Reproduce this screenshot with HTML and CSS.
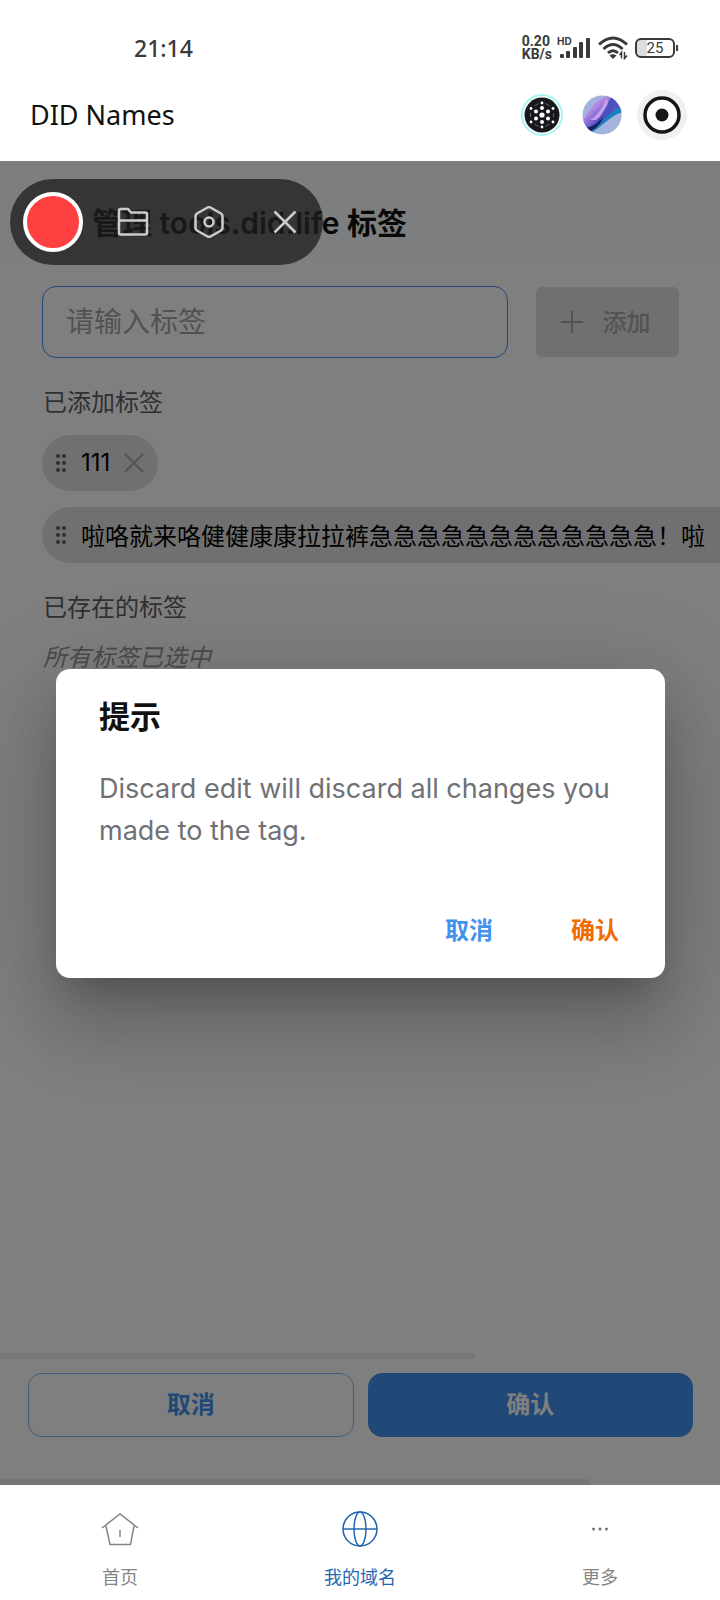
FILE: index.html
```html
<!DOCTYPE html>
<html lang="zh-CN">
<head>
  <meta charset="UTF-8" />
  <meta name="viewport" content="width=device-width, initial-scale=1.0" />
  <title>DID Names</title>
  <link rel="stylesheet" href="styles.css">
</head>
<body>
  <div class="status-bar">
    <span class="time">21:14</span>
    <div class="status-icons">
      <span class="speed"><span>0.20</span><span>KB/s</span></span>
      <span class="signal">
        <span class="hd">HD</span>
        <svg width="32" height="22" viewBox="0 0 32 22" fill="#3a3a3a">
          <rect x="1" y="17" width="4" height="4" rx="1" />
          <rect x="7" y="14" width="4" height="7" rx="1" />
          <rect x="14" y="10" width="4" height="11" rx="1" />
          <rect x="20" y="5" width="4" height="16" rx="1" />
          <rect x="27" y="1" width="4" height="20" rx="1" />
        </svg>
      </span>
      <svg width="30" height="24" viewBox="0 0 30 24" fill="none" stroke="#3a3a3a" stroke-width="3">
        <path d="M1 8.5Q15-4.500 29 8.500" />
        <path d="M5.500 13Q15 4 24.500 13" />
        <path d="M10 17Q15 12.500 20 17" />
        <path d="M11.500 19.500L15 23l3.500-3.500Q15 17 11.500 19.500z" fill="#3a3a3a" stroke="none" />
        <path d="M23.500 22.500v-6l-2 2.500M26.500 16v6.500l2.500-3" stroke-width="1.500" />
      </svg>
      <span class="battery">25</span>
    </div>
  </div>

  <header class="app-bar">
    <h1>DID Names</h1>
    <div class="app-actions">
      <button aria-label="Network">
        <svg width="50" height="50" viewBox="0 0 50 50">
          <circle cx="25" cy="25" r="20" fill="#fff" stroke="#a5f5f3" stroke-width="2" />
          <circle cx="25" cy="25" r="17.500" fill="#16181c" />
          <g fill="#fff">
            <circle cx="25" cy="25" r="2.600" />
            <circle cx="25" cy="18" r="2" /><circle cx="25" cy="32" r="2" />
            <circle cx="19" cy="21.500" r="2" /><circle cx="31" cy="21.500" r="2" />
            <circle cx="19" cy="28.500" r="2" /><circle cx="31" cy="28.500" r="2" />
            <circle cx="25" cy="13" r="1.400" /><circle cx="25" cy="37" r="1.400" />
            <circle cx="14" cy="18.500" r="1.400" /><circle cx="36" cy="18.500" r="1.400" />
            <circle cx="14" cy="32" r="1.400" /><circle cx="36" cy="32" r="1.400" />
          </g>
          <path d="M17.500 16l4-2.500M28.500 13.500l4 2.500M13.500 23v4M36.500 23v4M17.500 34l4 2.500M28.500 36.500l4-2.500" stroke="#62656a" fill="none" />
        </svg>
      </button>
      <button aria-label="Account">
        <svg width="50" height="50" viewBox="0 0 50 50">
          <defs>
            <clipPath id="avatarClip"><circle cx="25" cy="25" r="19.500" /></clipPath>
            <linearGradient id="petal" x1="0" y1="0" x2="1" y2="1">
              <stop offset="0" stop-color="#4a55b8" />
              <stop offset=".3" stop-color="#b98de6" />
              <stop offset=".55" stop-color="#5a4fc4" />
              <stop offset="1" stop-color="#1787bd" />
            </linearGradient>
          </defs>
          <g clip-path="url(#avatarClip)">
            <rect width="50" height="50" fill="#a3b3de" />
            <path d="M4 35C11 20 20 8 33 5l13 8v9C34 24 24 34 10 44z" fill="url(#petal)" />
            <path d="M13 30C21 25 26 17 29 8c5 5 0 15-10 22z" fill="#c79bea" />
            <path d="M11 38C23 31 29 17 35 6l5 4C35 23 26 33 12 41z" fill="#4a50c0" />
            <path d="M12 41C25 34 31 22 46 15v7C34 25 27 35 14 43z" fill="#1b7fbd" />
            <path d="M7 38c9-1 14-5 19-11-2 8-9 13-17 17z" fill="#17205f" />
          </g>
        </svg>
      </button>
      <button aria-label="Close">
        <svg width="50" height="50" viewBox="0 0 50 50">
          <circle cx="25" cy="25" r="25" fill="#f0f0f0" />
          <circle cx="25" cy="25" r="17" fill="#fff" stroke="#161616" stroke-width="3.500" />
          <circle cx="25" cy="25" r="6.500" fill="#161616" />
        </svg>
      </button>
    </div>
  </header>

  <main class="page">
    <h2 class="page-title">管理 tools.did.life 标签</h2>

    <div class="content">
      <form class="tag-form">
        <input type="text" id="tagInput" placeholder="请输入标签" aria-label="标签" />
        <button type="submit" disabled>
          <svg width="22" height="22" viewBox="0 0 22 22" stroke="currentColor" stroke-width="2"><path d="M0 11h22M11 0v22" /></svg>
          <span>添加</span>
        </button>
      </form>

      <h3>已添加标签</h3>
      <div class="tag-list">
        <div class="tag">
          <svg class="grip" width="12" height="20" viewBox="0 0 12 20"><circle cx="3" cy="3" r="2" /><circle cx="9" cy="3" r="2" /><circle cx="3" cy="10" r="2" /><circle cx="9" cy="10" r="2" /><circle cx="3" cy="17" r="2" /><circle cx="9" cy="17" r="2" /></svg>
          <span>111</span>
          <button aria-label="删除"><svg width="20" height="20" viewBox="0 0 20 20" stroke="currentColor" stroke-width="2"><path d="M1 1l18 18M19 1L1 19" /></svg></button>
        </div>
        <div class="tag">
          <svg class="grip" width="12" height="20" viewBox="0 0 12 20"><circle cx="3" cy="3" r="2" /><circle cx="9" cy="3" r="2" /><circle cx="3" cy="10" r="2" /><circle cx="9" cy="10" r="2" /><circle cx="3" cy="17" r="2" /><circle cx="9" cy="17" r="2" /></svg>
          <span>啦咯就来咯健健康康拉拉裤急急急急急急急急急急急急！啦</span>
          <button aria-label="删除"><svg width="20" height="20" viewBox="0 0 20 20" stroke="currentColor" stroke-width="2"><path d="M1 1l18 18M19 1L1 19" /></svg></button>
        </div>
      </div>

      <h3>已存在的标签</h3>
      <p class="empty">所有标签已选中</p>
    </div>

    <div class="scroll-track inner"></div>
    <div class="page-actions">
      <button class="btn-outline">取消</button>
      <button class="btn-primary">确认</button>
    </div>
    <div class="scroll-track outer"></div>

    <div class="overlay">
      <div class="dialog" role="dialog" aria-modal="true" aria-labelledby="dialogTitle">
        <h2 id="dialogTitle">提示</h2>
        <p>Discard edit will discard all changes you made to the tag.</p>
        <div class="dialog-actions">
          <button class="cancel">取消</button>
          <button class="confirm">确认</button>
        </div>
      </div>
    </div>

    <!-- floating screen recorder -->
    <div class="recorder">
      <button class="record" aria-label="Record"></button>
      <button aria-label="Files">
        <svg width="32" height="32" viewBox="0 0 32 32"><path d="M2 4.500Q2 3 3.500 3H11l3 3.500h14.500Q30 6.500 30 8v19q0 1.500-1.500 1.500h-25Q2 28.500 2 27zM2 14.500h28" /></svg>
      </button>
      <button aria-label="Settings">
        <svg width="32" height="32" viewBox="0 0 32 32"><path d="M14.500 1.500Q16 .5 17.500 1.500L28 7.500q1.500 1 1.500 2.500v12q0 1.500-1.500 2.500l-10.500 6q-1.500 1-3 0L4 24.500Q2.500 23.500 2.500 22V10Q2.500 8.500 4 7.500z" /><circle cx="16" cy="16" r="4.500" /></svg>
      </button>
      <button aria-label="Close recorder">
        <svg width="32" height="32" viewBox="0 0 32 32"><path d="M5.500 5.500l21 21M26.500 5.500l-21 21" /></svg>
      </button>
    </div>
  </main>

  <nav class="tab-bar">
    <a href="#home">
      <svg width="40" height="40" viewBox="0 0 40 40"><path d="M2 19L20 5l18 14M6 17l4 18.500h20.500L34 17M20 21v7" /></svg>
      首页
    </a>
    <a href="#names" class="active">
      <svg width="40" height="40" viewBox="0 0 40 40"><circle cx="20" cy="20" r="17" /><ellipse cx="20" cy="20" rx="6" ry="17" /><path d="M3 20h34" /></svg>
      我的域名
    </a>
    <a href="#more">
      <svg width="40" height="40" viewBox="0 0 40 40"><g fill="#707070" stroke="none"><circle cx="13.500" cy="20" r="1.500" /><circle cx="20" cy="20" r="1.500" /><circle cx="26.500" cy="20" r="1.500" /></g></svg>
      更多
    </a>
  </nav>
</body>
</html>
```

FILE: styles.css
```css
:root {
  --primary: #4292ee;
  --active: #2566b0;
  --warning: #f06c00;
  --dark: #111;
  --muted: #707175;
}

* {
  box-sizing: border-box;
}

body {
  margin: 0;
  min-height: 100vh;
  display: flex;
  flex-direction: column;
  background: #fff;
  color: var(--dark);
  font-family: Inter, "Noto Sans CJK SC", sans-serif;
  font-size: 24px;
}

h1, h2, h3, p {
  margin: 0;
}

button {
  display: flex;
  align-items: center;
  justify-content: center;
  padding: 0;
  border: none;
  background: none;
  font-family: inherit;
  font-size: 24px;
  color: inherit;
  cursor: pointer;
}

svg {
  display: block;
  flex: none;
}

.status-bar {
  display: flex;
  align-items: center;
  justify-content: space-between;
  height: 72px;
  padding: 24px 40px 0 134px;
  color: #3a3a3a;
}

.time {
  font-family: "Noto Sans", sans-serif;
  font-size: 23px;
  font-weight: 500;
}

.status-icons {
  display: flex;
  align-items: center;
  gap: 7px;
}

.speed {
  display: flex;
  flex-direction: column;
  font-family: Roboto, sans-serif;
  font-size: 14px;
  line-height: 13px;
  font-weight: 700;
}

.signal {
  position: relative;
}

.hd {
  position: absolute;
  top: 0;
  left: -2px;
  font-size: 10px;
  line-height: 8px;
  font-weight: 700;
}

.battery {
  position: relative;
  width: 40px;
  height: 20px;
  margin-right: 5px;
  border: 2px solid #3a3a3a;
  border-radius: 6px;
  background: linear-gradient(90deg, #ddd 10px, #fff 10px);
  font-family: Roboto, sans-serif;
  font-size: 15px;
  line-height: 16px;
  text-align: center;
}

.battery::after {
  content: '';
  position: absolute;
  right: -5px;
  top: 5px;
  width: 2px;
  height: 6px;
  background: #3a3a3a;
}

.app-bar {
  display: flex;
  align-items: center;
  justify-content: space-between;
  height: 89px;
  padding: 0 33px 4px 30px;
}

.app-bar h1 {
  font-family: "Noto Sans", sans-serif;
  font-size: 27px;
  font-weight: 400;
}

.app-actions {
  display: flex;
  gap: 10px;
}

.page {
  position: relative;
  flex: 1;
  display: flex;
  flex-direction: column;
  overflow: hidden;
  background: #fff;
}

.page-title {
  padding: 40px 92px 11px;
  background: #fafcff;
  font-size: 30px;
  line-height: 45px;
  font-weight: 600;
}

.content {
  flex: 1;
  padding: 29px 41px 0 42px;
}

.tag-form {
  display: flex;
  align-items: center;
  gap: 28px;
}

.tag-form input {
  flex: 1;
  min-width: 0;
  height: 72px;
  padding: 0 23px;
  border: 1px solid var(--primary);
  border-radius: 14px;
  background: none;
  font-family: inherit;
  font-size: 28px;
}

.tag-form input::placeholder {
  color: #a4a4a4;
}

.tag-form button {
  gap: 20px;
  width: 143px;
  height: 70px;
  padding-right: 4px;
  border-radius: 6px;
  background: #e0e0e0;
  color: #a6a6a6;
  font-weight: 500;
}

.tag-form button span {
  padding-bottom: 4px;
}

h3 {
  margin: 27px 1px 0;
  font-size: 24px;
  line-height: 36px;
  font-weight: 400;
  color: #606166;
}

.tag-list {
  display: flex;
  flex-direction: column;
  align-items: flex-start;
  gap: 16px;
  margin-top: 14px;
}

.tag {
  display: flex;
  align-items: center;
  flex: none;
  height: 56px;
  padding: 0 14px 0 13px;
  border-radius: 28px;
  background: #e0e0e0;
  color: #000;
  white-space: nowrap;
}

.tag span {
  margin: 0 14px;
  padding-bottom: 2px;
}

.tag button {
  color: #a6a6a6;
}

.grip {
  fill: #606060;
}

.empty {
  margin: 14px 1px 0;
  line-height: 36px;
  font-style: italic;
  color: #999;
}

.scroll-track {
  height: 6px;
  border-radius: 0 3px 3px 0;
  background: #ececec;
}

.scroll-track.inner {
  width: 66%;
}

.scroll-track.outer {
  width: 82%;
  margin-top: 42px;
}

.page-actions {
  display: flex;
  gap: 14px;
  padding: 14px 27px 0 28px;
}

.page-actions button {
  flex: 1;
  height: 64px;
  padding-bottom: 6px;
  border: 1px solid #80baff;
  border-radius: 14px;
  font-weight: 600;
}

.page-actions .btn-outline {
  color: var(--primary);
}

.page-actions .btn-primary {
  border-color: var(--primary);
  background: var(--primary);
  color: #fff;
}

.overlay {
  position: absolute;
  inset: 0;
  display: flex;
  align-items: center;
  padding: 0 55px 0 56px;
  background: rgba(0, 0, 0, 0.5);
}

.dialog {
  flex: 1;
  padding: 24px 43px 20px;
  border-radius: 14px;
  background: #fff;
  box-shadow: 0 22px 30px -14px rgba(0, 0, 0, 0.2), 0 48px 76px 6px rgba(0, 0, 0, 0.14), 0 18px 92px 16px rgba(0, 0, 0, 0.12);
}

.dialog h2 {
  font-size: 31px;
  line-height: 48px;
  font-weight: 600;
}

.dialog p {
  margin-top: 27px;
  font-size: 27px;
  line-height: 42px;
  color: var(--muted);
}

.dialog-actions {
  display: flex;
  justify-content: flex-end;
  gap: 78px;
  margin-top: 50px;
  padding-right: 3px;
}

.dialog-actions button {
  height: 56px;
  padding-bottom: 2px;
  font-weight: 600;
}

.cancel {
  color: var(--primary);
}

.confirm {
  color: var(--warning);
}

.recorder {
  position: absolute;
  top: 18px;
  left: 10px;
  display: flex;
  align-items: center;
  gap: 44px;
  height: 86px;
  padding: 0 22px 0 13px;
  border-radius: 43px;
  background: rgba(29, 30, 31, 0.75);
}

.recorder svg {
  fill: none;
  stroke: #ccc;
  stroke-width: 2.5px;
}

.record {
  width: 60px;
  height: 60px;
  margin-right: -10px;
  border: 4px solid #fff;
  border-radius: 50%;
  background: #ff4040;
}

.tab-bar {
  display: flex;
  height: 115px;
  padding-top: 24px;
}

.tab-bar a {
  flex: 1;
  display: flex;
  flex-direction: column;
  align-items: center;
  gap: 16px;
  font-size: 18px;
  line-height: 26px;
  color: #858585;
  text-decoration: none;
}

.tab-bar a.active {
  color: var(--active);
}

.tab-bar svg {
  fill: none;
  stroke: currentColor;
  stroke-width: 1.5px;
}
```
